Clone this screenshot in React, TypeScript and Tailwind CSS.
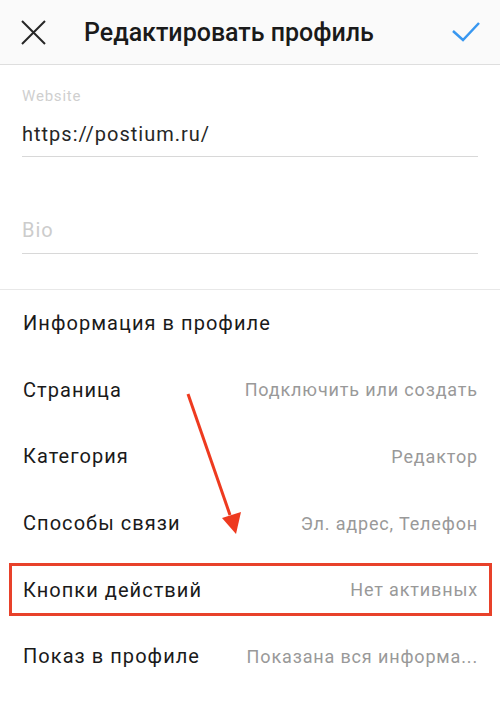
import React from "react";

const rows: { label: string; value?: string; highlight?: boolean }[] = [
  { label: "Информация в профиле" },
  { label: "Страница", value: "Подключить или создать" },
  { label: "Категория", value: "Редактор" },
  { label: "Способы связи", value: "Эл. адрес, Телефон" },
  { label: "Кнопки действий", value: "Нет активных", highlight: true },
  { label: "Показ в профиле", value: "Показана вся информа..." },
];

export default function App() {
  return (
    <div
      className="relative w-[500px] h-[707px] bg-white overflow-hidden text-[#262626]"
      style={{ fontFamily: "Roboto, 'Noto Sans', sans-serif" }}
    >
      {/* Header */}
      <div className="h-[65px] bg-[#fafafa] border-b border-[#dedede] flex items-center">
        <div className="w-[84px] pl-[21px] flex items-center">
          <svg width="25" height="25" viewBox="0 0 25 25">
            <path d="M1 1 L24 24 M24 1 L1 24" stroke="#262626" strokeWidth="2" fill="none" />
          </svg>
        </div>
        <div className="flex-1 text-[25px] font-medium text-[#1a1a1a] leading-none whitespace-nowrap">
          Редактировать профиль
        </div>
        <div className="pr-[20px] flex items-center">
          <svg width="28" height="20" viewBox="0 0 28 20">
            <path d="M1 9 L11 18 L27 1" stroke="#3897f0" strokeWidth="2.5" fill="none" />
          </svg>
        </div>
      </div>

      {/* Website */}
      <div className="px-[22px]">
        <div className="pt-[22px] text-[15px] leading-[18px] tracking-[0.8px] text-[#cfcfcf]">Website</div>
        <div className="pt-[17px] pb-[10px] text-[20px] leading-[24px] tracking-[1px] text-[#262626] border-b border-[#d8d8d8]">
          https://postium.ru/
        </div>
        <div className="pt-[61px] pb-[11px] text-[20px] leading-[24px] tracking-[1px] text-[#cccccc] border-b border-[#d8d8d8]">
          Bio
        </div>
      </div>

      <div className="mt-[35px] h-[1px] bg-[#e8e8e8]" />

      {/* Rows */}
      <div>
        {rows.map((r) => (
          <div key={r.label} className="relative h-[66.6px] flex items-center justify-between pl-[23px] pr-[22px]">
            <span className="text-[20px] tracking-[1.05px] text-[#1a1a1a] whitespace-nowrap">{r.label}</span>
            {r.value && (
              <span className="text-[18px] tracking-[0.85px] text-[#999999] whitespace-nowrap">{r.value}</span>
            )}
            {r.highlight && (
              <div className="absolute left-[9px] right-[8px] top-[7px] bottom-[7px] border-[3px] border-[#e8412a]" />
            )}
          </div>
        ))}
      </div>

      {/* Arrow */}
      <svg className="absolute left-0 top-0" width="500" height="707" viewBox="0 0 500 707">
        <line x1="188" y1="394" x2="230" y2="515" stroke="#ee3a1f" strokeWidth="3" />
        <polygon points="222,518 241,512 236,534" fill="#ee3a1f" />
      </svg>
    </div>
  );
}
